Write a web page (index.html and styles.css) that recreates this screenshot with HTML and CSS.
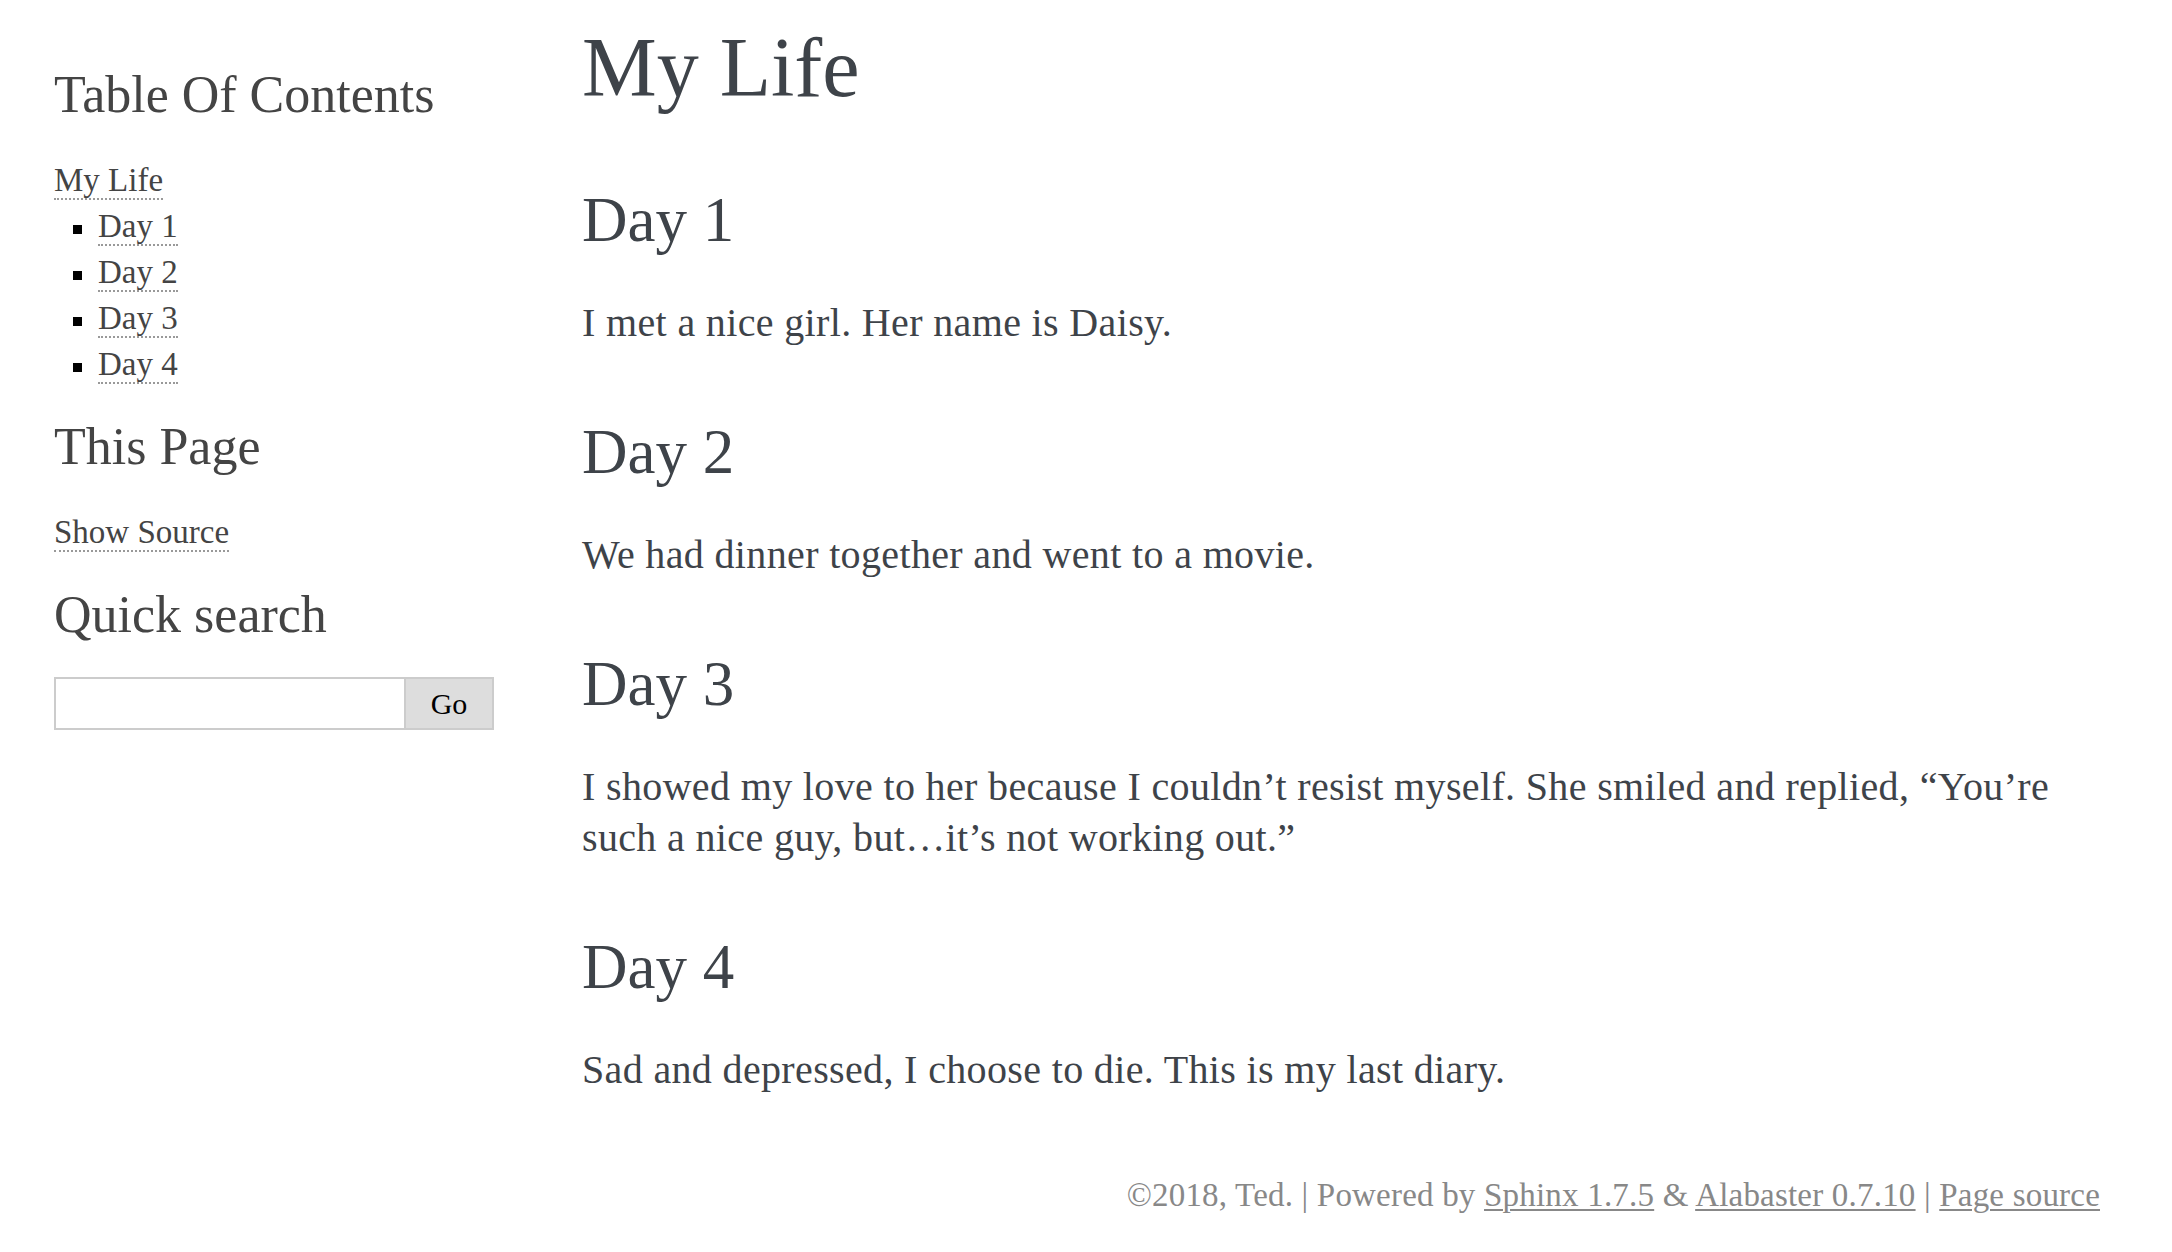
FILE: index.html
```html
<!DOCTYPE html>
<html lang="en">
<head>
<meta charset="utf-8">
<title>My Life</title>
<link rel="stylesheet" href="styles.css">
</head>
<body>
<div class="document">
  <aside class="sidebar">
    <h3 class="side-title">Table Of Contents</h3>
    <ul class="toc">
      <li class="toc-top"><a href="#">My Life</a>
        <ul class="toc-sub">
          <li><a href="#day-1">Day 1</a></li>
          <li><a href="#day-2">Day 2</a></li>
          <li><a href="#day-3">Day 3</a></li>
          <li><a href="#day-4">Day 4</a></li>
        </ul>
      </li>
    </ul>
    <h3 class="side-title">This Page</h3>
    <ul class="toc">
      <li class="toc-top"><a href="#">Show Source</a></li>
    </ul>
    <h3 class="side-title">Quick search</h3>
    <form class="search">
      <input class="search-input" type="text" name="q">
      <input class="search-go" type="submit" value="Go">
    </form>
  </aside>
  <main class="body">
    <h1 class="title">My Life</h1>
    <section class="day" id="day-1">
      <h2 class="day-title">Day 1</h2>
      <p class="text">I met a nice girl. Her name is Daisy.</p>
    </section>
    <section class="day" id="day-2">
      <h2 class="day-title">Day 2</h2>
      <p class="text">We had dinner together and went to a movie.</p>
    </section>
    <section class="day" id="day-3">
      <h2 class="day-title">Day 3</h2>
      <p class="text">I showed my love to her because I couldn’t resist myself. She smiled and replied, “You’re such a nice guy, but…it’s not working out.”</p>
    </section>
    <section class="day" id="day-4">
      <h2 class="day-title">Day 4</h2>
      <p class="text">Sad and depressed, I choose to die. This is my last diary.</p>
    </section>
  </main>
</div>
<footer class="footer">
  ©2018, Ted. | Powered by <a href="#">Sphinx 1.7.5</a> &amp; <a href="#">Alabaster 0.7.10</a> | <a href="#">Page source</a>
</footer>
</body>
</html>
```

FILE: styles.css
```css
html, body {
  margin: 0;
  padding: 0;
  background: #fff;
}

body {
  font-family: "Liberation Serif", "Times New Roman", serif;
  color: #3E4349;
}

.document {
  display: grid;
  grid-template-columns: 440px 1490px;
  column-gap: 88px;
  padding-left: 54px;
  align-items: start;
}

/* Sidebar */
.sidebar {
  padding-top: 69px;
  font-size: 33px;
  line-height: 46px;
  color: #000;
}

.side-title {
  margin: 0 0 37px 0;
  font-size: 52px;
  line-height: 51px;
  font-weight: normal;
  color: #444;
}

.toc {
  list-style: none;
  margin: 0 0 34px 0;
  padding: 0;
}

.toc-sub {
  list-style: none;
  margin: 0;
  padding: 0;
}

.toc-sub li {
  position: relative;
  padding-left: 44px;
}

.toc-sub li::before {
  content: "";
  position: absolute;
  left: 19px;
  top: 22px;
  width: 9px;
  height: 9px;
  background: #000;
}

.sidebar a {
  color: #444;
  text-decoration: none;
  border-bottom: 2px dotted #999;
}

.search {
  display: flex;
  width: 440px;
  height: 53px;
  margin: 0;
}

.search-input {
  box-sizing: border-box;
  width: 80%;
  height: 53px;
  margin: 0;
  border: 2px solid #ccc;
  background: #fff;
  font-family: "Liberation Serif", serif;
  font-size: 30px;
  padding: 4px 8px;
  outline: none;
}

.search-go {
  box-sizing: border-box;
  width: 20%;
  height: 53px;
  margin: 0;
  border: 2px solid #ccc;
  border-left: none;
  background: #ddd;
  color: #000;
  font-family: "Liberation Serif", serif;
  font-size: 30px;
  padding: 0;
}

/* Body */
.body {
  display: flex;
  flex-direction: column;
  padding-top: 26px;
}

.title {
  margin: 0 0 79px 0;
  font-size: 84px;
  line-height: 84px;
  font-weight: normal;
  color: #3E4349;
}

.day {
  margin: 0 0 73px 0;
}

.day:last-child {
  margin-bottom: 0;
}

.day-title {
  margin: 0 0 45px 0;
  font-size: 63px;
  line-height: 63px;
  font-weight: normal;
  color: #3E4349;
}

.text {
  margin: 0;
  font-size: 40px;
  line-height: 51px;
  letter-spacing: 0.35px;
}

/* Footer */
.footer {
  margin-top: 80px;
  padding-right: 72px;
  text-align: right;
  font-size: 33px;
  line-height: 40px;
  letter-spacing: 0.2px;
  color: #888;
}

.footer a {
  color: #888;
  text-decoration: underline;
  text-decoration-thickness: 2px;
  text-underline-offset: 3px;
}
```
